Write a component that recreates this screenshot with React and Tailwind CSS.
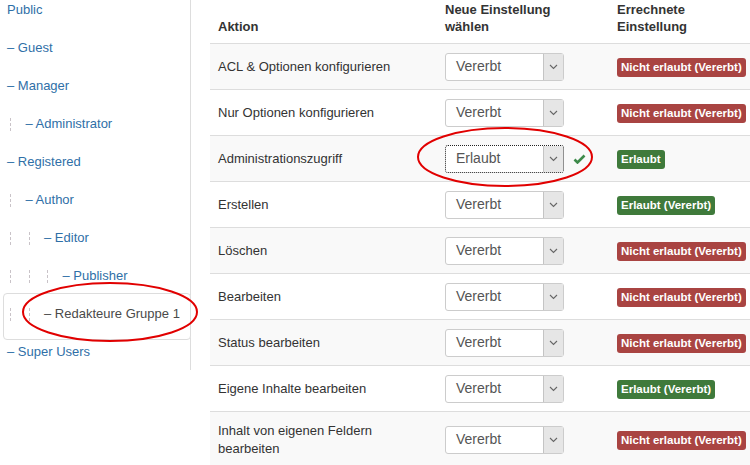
import React from 'react';

const groups = [
  { name: 'Public', level: 0, plain: true },
  { name: 'Guest', level: 0 },
  { name: 'Manager', level: 0 },
  { name: 'Administrator', level: 1 },
  { name: 'Registered', level: 0 },
  { name: 'Author', level: 1 },
  { name: 'Editor', level: 2 },
  { name: 'Publisher', level: 3 },
  { name: 'Redakteure Gruppe 1', level: 2, active: true },
  { name: 'Super Users', level: 0 },
];

const rows = [
  { action: 'ACL & Optionen konfigurieren', value: 'Vererbt', result: 'Nicht erlaubt (Vererbt)', ok: false },
  { action: 'Nur Optionen konfigurieren', value: 'Vererbt', result: 'Nicht erlaubt (Vererbt)', ok: false },
  { action: 'Administrationszugriff', value: 'Erlaubt', result: 'Erlaubt', ok: true, focused: true },
  { action: 'Erstellen', value: 'Vererbt', result: 'Erlaubt (Vererbt)', ok: true },
  { action: 'Löschen', value: 'Vererbt', result: 'Nicht erlaubt (Vererbt)', ok: false },
  { action: 'Bearbeiten', value: 'Vererbt', result: 'Nicht erlaubt (Vererbt)', ok: false },
  { action: 'Status bearbeiten', value: 'Vererbt', result: 'Nicht erlaubt (Vererbt)', ok: false },
  { action: 'Eigene Inhalte bearbeiten', value: 'Vererbt', result: 'Erlaubt (Vererbt)', ok: true },
  { action: ['Inhalt von eigenen Feldern', 'bearbeiten'], value: 'Vererbt', result: 'Nicht erlaubt (Vererbt)', ok: false, tall: true },
];

// kleine gestrichelte Einrückungsmarke
const Marker = () => (
  <span className="w-[18.5px] shrink-0 flex pl-[3px]">
    <span className="h-[13px] border-l border-dashed border-[#c9c3c8]" />
  </span>
);

const Chevron = () => (
  <svg width="9" height="6" viewBox="0 0 9 6" fill="none">
    <path d="M1 1l3.5 3.5L8 1" stroke="#666" strokeWidth="1.1" />
  </svg>
);

const Select = ({ value, focused }) => (
  <div
    className={
      'flex h-[28px] w-[119px] rounded-[3px] bg-white ' +
      (focused ? 'border border-dotted border-[#222]' : 'border border-[#ccc]')
    }
  >
    <span className="flex-1 flex items-center pl-[10px] text-[14px] text-[#555]">{value}</span>
    <span className="w-[20px] flex items-center justify-center bg-[#e6e6e6] border-l border-[#c4c4c4]">
      <Chevron />
    </span>
  </div>
);

const Badge = ({ text, ok }) => (
  <span
    className={
      'inline-block whitespace-nowrap rounded-[3px] px-[4px] h-[19px] leading-[19px] text-[11.5px] font-bold text-white ' +
      (ok ? 'bg-[#3f7a3b]' : 'bg-[#a94442]')
    }
  >
    {text}
  </span>
);

const App = () => {
  return (
    <div
      className="relative w-[750px] h-[465px] overflow-hidden bg-white flex text-[13px] text-[#333]"
      style={{ fontFamily: '"Liberation Sans", Arial, sans-serif' }}
    >
      {/* Gruppenliste */}
      <div className="w-[191px] shrink-0 h-[370px] border-r border-[#ddd]">
        <div className="-mt-[9px]">
          {groups.map((g) => (
            <div key={g.name} className="relative h-[38px] flex items-center pl-[7px] text-[13px]">
              {g.active && (
                <span className="absolute left-[3px] -right-[1px] -top-[2px] -bottom-[7px] rounded-[4px] border border-[#ddd] bg-white" />
              )}
              <span className="relative flex items-center">
                {Array.from({ length: g.level }).map((_, i) => (
                  <Marker key={i} />
                ))}
                <span className={g.active ? 'text-[#4a4a4a]' : 'text-[#2f6fa7]'}>
                  {g.plain ? g.name : '– ' + g.name}
                </span>
              </span>
            </div>
          ))}
        </div>
      </div>

      {/* Berechtigungstabelle */}
      <div className="ml-[19px] flex-1 min-w-0">
        <div className="grid grid-cols-[227px_172px_1fr] h-[44px] border-b border-[#ddd] font-bold leading-[17px] items-end pb-[8px]">
          <div className="pl-[8px]">Aktion</div>
          <div className="pl-[8px]">
            Neue Einstellung
            <br />
            wählen
          </div>
          <div className="pl-[8px]">
            Errechnete
            <br />
            Einstellung
          </div>
        </div>
        {rows.map((r, i) => (
          <div
            key={i}
            className={
              'grid grid-cols-[227px_172px_1fr] items-center border-b border-[#ddd] ' +
              (r.tall ? 'h-[56px] ' : 'h-[46px] ') +
              (i % 2 === 0 ? 'bg-[#f9f9f9]' : 'bg-white')
            }
          >
            <div className="pl-[8px] leading-[18px]">
              {Array.isArray(r.action) ? (
                <>
                  {r.action[0]}
                  <br />
                  {r.action[1]}
                </>
              ) : (
                r.action
              )}
            </div>
            <div className="pl-[8px] flex items-center">
              <Select value={r.value} focused={r.focused} />
              {r.focused && (
                <svg className="ml-[9px]" width="13" height="10" viewBox="0 0 13 10" fill="none">
                  <path d="M1.5 5.5l3 3L11.5 1.5" stroke="#3d8a4a" strokeWidth="2.6" />
                </svg>
              )}
            </div>
            <div className="pl-[8px]">
              <Badge text={r.result} ok={r.ok} />
            </div>
          </div>
        ))}
      </div>

      {/* rote Markierungen */}
      <svg className="absolute inset-0 pointer-events-none" width="750" height="465">
        <ellipse cx="110" cy="312" rx="87" ry="29" fill="none" stroke="#e10000" strokeWidth="2" />
        <ellipse cx="505" cy="157" rx="87" ry="29" fill="none" stroke="#e10000" strokeWidth="2" />
      </svg>
    </div>
  );
};

export default App;
